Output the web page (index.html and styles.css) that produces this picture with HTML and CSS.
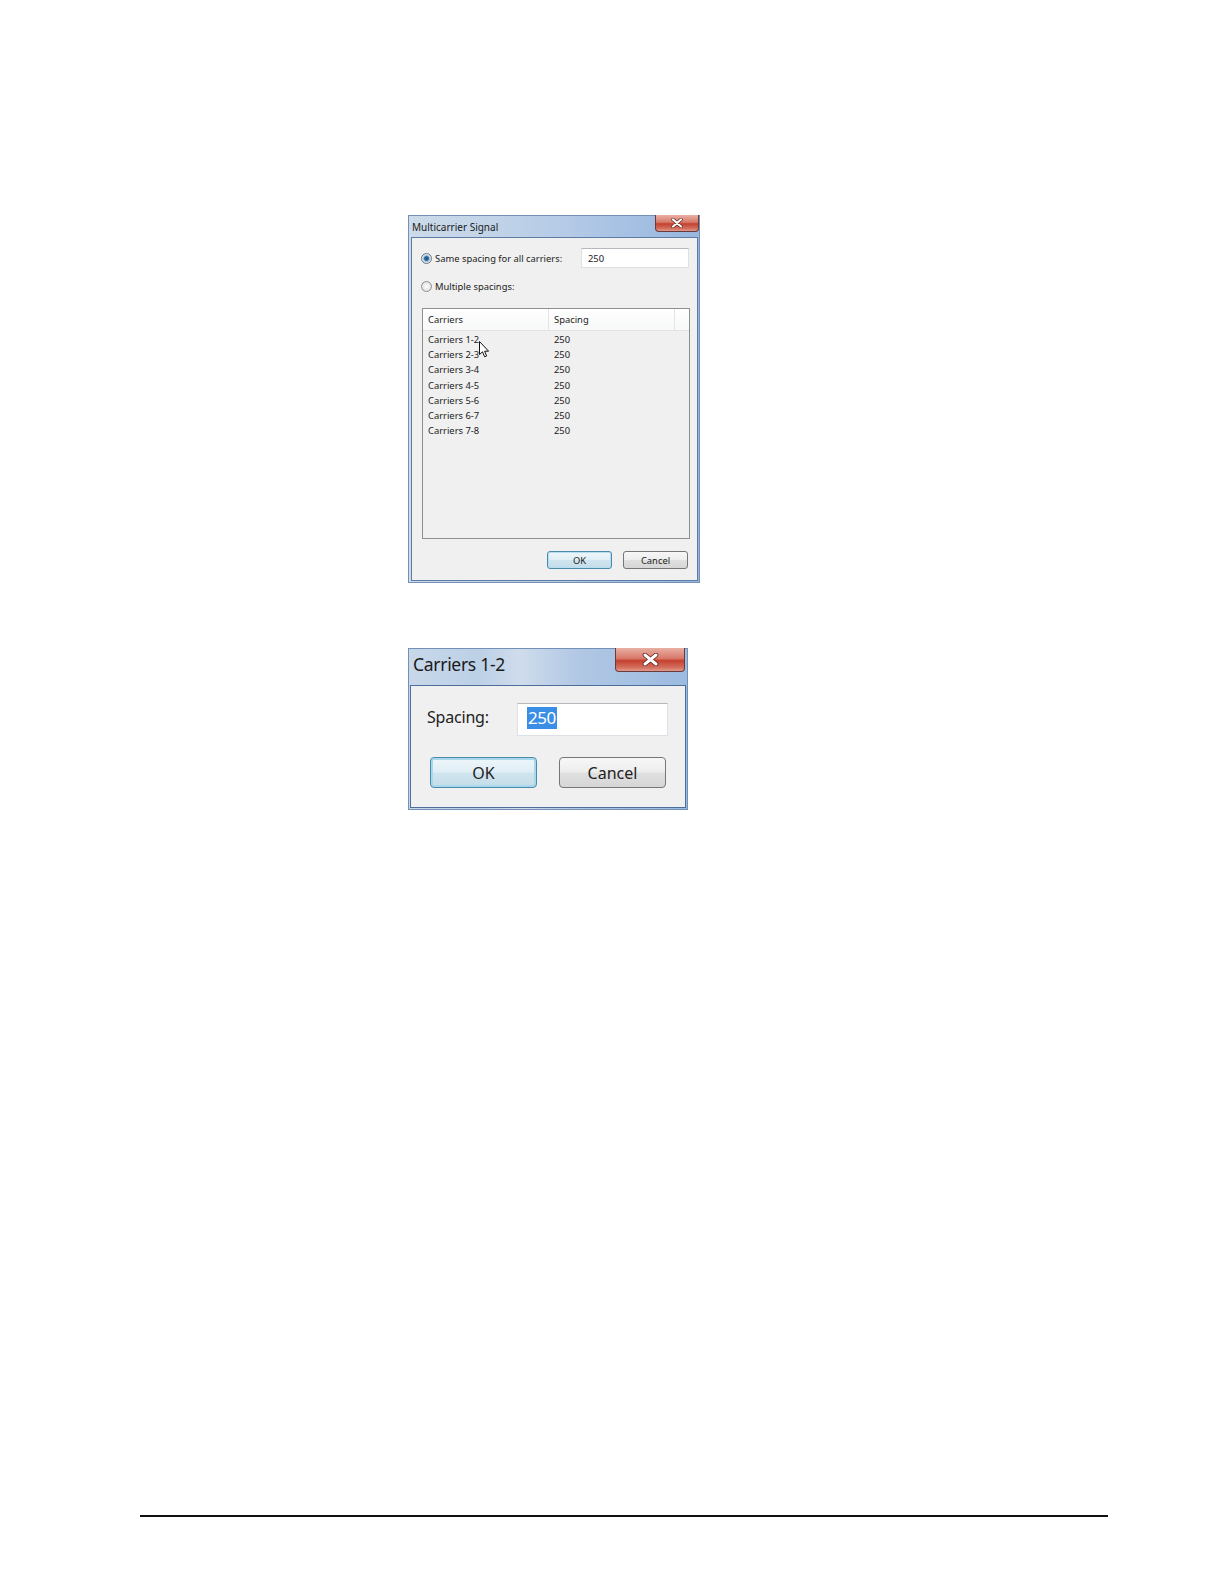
FILE: index.html
```html
<!DOCTYPE html>
<html>
<head>
<meta charset="utf-8">
<title>Multicarrier Signal</title>
<link rel="stylesheet" href="styles.css">
</head>
<body>
<div class="page">
  <div class="dlg dlg1">
    <div class="titlebar tb1">
      <span class="title t1">Multicarrier Signal</span>
      <span class="close c1"><svg width="12" height="10" viewBox="0 0 12 10"><path d="M2 1.5 L10 8.5 M10 1.5 L2 8.5" stroke="#5a2018" stroke-width="3.4" stroke-linecap="round"/><path d="M2 1.5 L10 8.5 M10 1.5 L2 8.5" stroke="#ffffff" stroke-width="2.2" stroke-linecap="round"/></svg></span>
    </div>
    <div class="client cl1">
      <div class="row r1">
        <span class="radio checked"></span>
        <span class="lbl">Same spacing for all carriers:</span>
        <span class="field f1">250</span>
      </div>
      <div class="row r2">
        <span class="radio"></span>
        <span class="lbl">Multiple spacings:</span>
      </div>
      <div class="list">
        <div class="lhead">
          <span class="hc hc1">Carriers</span>
          <span class="hc hc2">Spacing</span>
          <span class="hc hc3"></span>
        </div>
        <div class="lbody">
          <div class="lrow"><span class="cc">Carriers 1-2</span><span class="cv">250</span></div>
          <div class="lrow"><span class="cc">Carriers 2-3</span><span class="cv">250</span></div>
          <div class="lrow"><span class="cc">Carriers 3-4</span><span class="cv">250</span></div>
          <div class="lrow"><span class="cc">Carriers 4-5</span><span class="cv">250</span></div>
          <div class="lrow"><span class="cc">Carriers 5-6</span><span class="cv">250</span></div>
          <div class="lrow"><span class="cc">Carriers 6-7</span><span class="cv">250</span></div>
          <div class="lrow"><span class="cc">Carriers 7-8</span><span class="cv">250</span></div>
        </div>
        <svg class="cursor" width="11" height="17" viewBox="0 0 11 17"><path d="M0.5 0.5 L0.5 13.5 L3.5 10.8 L5.6 15.8 L7.6 15 L5.6 10.2 L9.6 10.2 Z" fill="#ffffff" stroke="#111111" stroke-width="1"/></svg>
      </div>
      <div class="btns b1">
        <span class="btn def">OK</span>
        <span class="btn">Cancel</span>
      </div>
    </div>
  </div>

  <div class="dlg dlg2">
    <div class="titlebar tb2">
      <span class="title t2">Carriers 1-2</span>
      <span class="close c2"><svg width="17" height="13" viewBox="0 0 17 13"><path d="M3 2 L14 11 M14 2 L3 11" stroke="#5a2018" stroke-width="4.6" stroke-linecap="round"/><path d="M3 2 L14 11 M14 2 L3 11" stroke="#ffffff" stroke-width="3" stroke-linecap="round"/></svg></span>
    </div>
    <div class="client cl2">
      <div class="row r3">
        <span class="lbl2">Spacing:</span>
        <span class="field f2"><span class="sel">250</span></span>
      </div>
      <div class="btns b2">
        <span class="btn def big">OK</span>
        <span class="btn big">Cancel</span>
      </div>
    </div>
  </div>

  <div class="rule"></div>
</div>
</body>
</html>
```

FILE: styles.css
```css
html, body {
  margin: 0;
  padding: 0;
  background: #ffffff;
}
.page {
  padding-top: 215px;
  font-family: "Noto Sans", "DejaVu Sans", sans-serif;
  color: #222222;
}
.dlg {
  margin-left: 408px;
  display: flex;
  flex-direction: column;
  background: linear-gradient(90deg, #cddbea 0%, #c0d3e7 30%, #b4cae6 55%, #a3bfe2 80%, #98b7de 100%);
  box-sizing: border-box;
  border: 1px solid #7390b6;
}
.dlg1 {
  width: 292px;
  height: 368px;
  padding: 0 1px 1px 2px;
}
.dlg2 {
  margin-top: 65px;
  width: 280px;
  height: 162px;
  padding: 0 1px 1px 1px;
  background: linear-gradient(90deg, #c8d8ea 0%, #bcd0e6 25%, #cfdcec 40%, #b2c8e4 60%, #a6c1e2 80%, #9cbbe0 100%);
}
.titlebar {
  position: relative;
  display: flex;
  align-items: center;
  flex: none;
}
.tb1 { height: 21px; }
.tb2 { height: 36px; }
.title { color: #1a1a1a; }
.t1 { font-size: 10px; margin-left: 1px; margin-top: 1px; }
.t2 { font-size: 17.5px; margin-left: 3px; margin-top: -6px; letter-spacing: -0.3px; }
.close {
  position: absolute;
  top: -1px;
  box-sizing: border-box;
  border: 1px solid #6b3a3a;
  border-top: none;
  border-radius: 0 0 4px 4px;
  background: linear-gradient(180deg, #e9b0a4 0%, #d8796a 45%, #c4412f 55%, #d4705f 85%, #e29a8c 100%);
  display: flex;
  align-items: center;
  justify-content: center;
}
.c1 { right: -1px; width: 44px; height: 17px; }
.c2 { right: 1px; width: 70px; height: 24px; }

.client {
  flex: 1;
  background: #f0f0f0;
  border: 1px solid #5d7ba5;
  display: flex;
  flex-direction: column;
  box-sizing: border-box;
}
.cl1 {
  padding: 10px 8px 0 9px;
  font-size: 9.4px;
}
.row {
  display: flex;
  align-items: center;
}
.r1 { height: 20px; }
.r2 { height: 18px; margin-top: 9px; }
.radio {
  width: 11px;
  height: 11px;
  border-radius: 50%;
  border: 1px solid #8f8f8f;
  background: radial-gradient(circle, #ffffff 0%, #e6e6e6 60%, #cfcfcf 100%);
  margin-left: 0;
  margin-right: 3px;
  box-sizing: border-box;
  flex: none;
}
.radio.checked {
  background: radial-gradient(circle, #1d4f7a 0%, #2f6ea5 32%, #8fb2cf 44%, #dfe7ee 60%, #c9d2da 100%);
  border-color: #6a7784;
}
.lbl { white-space: nowrap; }
.field {
  background: #ffffff;
  box-sizing: border-box;
  border: 1px solid #dde1e6;
  border-top-color: #b5b8bd;
  display: flex;
  align-items: center;
}
.f1 {
  margin-left: auto;
  width: 108px;
  height: 20px;
  padding-left: 6px;
}
.list {
  position: relative;
  margin-top: 13px;
  margin-left: 1px;
  width: 268px;
  height: 231px;
  box-sizing: border-box;
  border: 1px solid #8e8f8f;
  background: #f0f0f0;
}
.lhead {
  display: flex;
  height: 21px;
  background: linear-gradient(180deg, #ffffff 0%, #f7f8f9 100%);
  border-bottom: 1px solid #e3e4e6;
}
.hc {
  display: flex;
  align-items: center;
  box-sizing: border-box;
  padding-left: 5px;
  border-right: 1px solid #e3e4e6;
}
.hc1 { width: 126px; }
.hc2 { width: 126px; }
.hc3 { flex: 1; border-right: none; }
.lbody { padding-top: 1px; }
.lrow {
  display: flex;
  height: 15.2px;
  align-items: center;
}
.cc { width: 126px; padding-left: 5px; box-sizing: border-box; }
.cv { padding-left: 5px; }
.cursor {
  position: absolute;
  left: 56px;
  top: 32px;
}
.btns {
  display: flex;
  justify-content: flex-end;
}
.b1 {
  margin-top: 12px;
  gap: 11px;
  padding-right: 1px;
}
.btn {
  box-sizing: border-box;
  width: 65px;
  height: 18px;
  border: 1px solid #767676;
  border-radius: 3px;
  background: linear-gradient(180deg, #f7f7f7 0%, #ededed 48%, #e0e0e0 52%, #d6d6d6 100%);
  display: flex;
  align-items: center;
  justify-content: center;
}
.btn.def {
  border-color: #4a8aaa;
  background: linear-gradient(180deg, #eef6fa 0%, #e0eef6 48%, #cfe4ef 52%, #c4dde9 100%);
  box-shadow: inset 0 0 0 1px #b5def0;
}
.cl2 {
  padding: 17px 17px 0 16px;
  border-color: #4d6d9a;
}
.r3 { height: 33px; }
.lbl2 { font-size: 16px; width: 90px; letter-spacing: -0.2px; margin-top: -5px; }
.f2 {
  width: 151px;
  height: 33px;
  padding-left: 9px;
  font-size: 17px;
}
.sel {
  background: #3a8ee6;
  color: #ffffff;
  padding: 0 1px;
  line-height: 22px;
  letter-spacing: -0.5px;
  margin-top: -3px;
}
.b2 {
  margin-top: 21px;
  justify-content: flex-start;
  gap: 22px;
  padding-left: 3px;
}
.btn.big {
  width: 107px;
  height: 31px;
  font-size: 16px;
  border-radius: 4px;
}
.btn.big.def {
  box-shadow: inset 0 0 0 2px #a9d8ec;
}
.rule {
  margin-top: 705px;
  margin-left: 140px;
  width: 968px;
  height: 2px;
  background: #111111;
}
```
